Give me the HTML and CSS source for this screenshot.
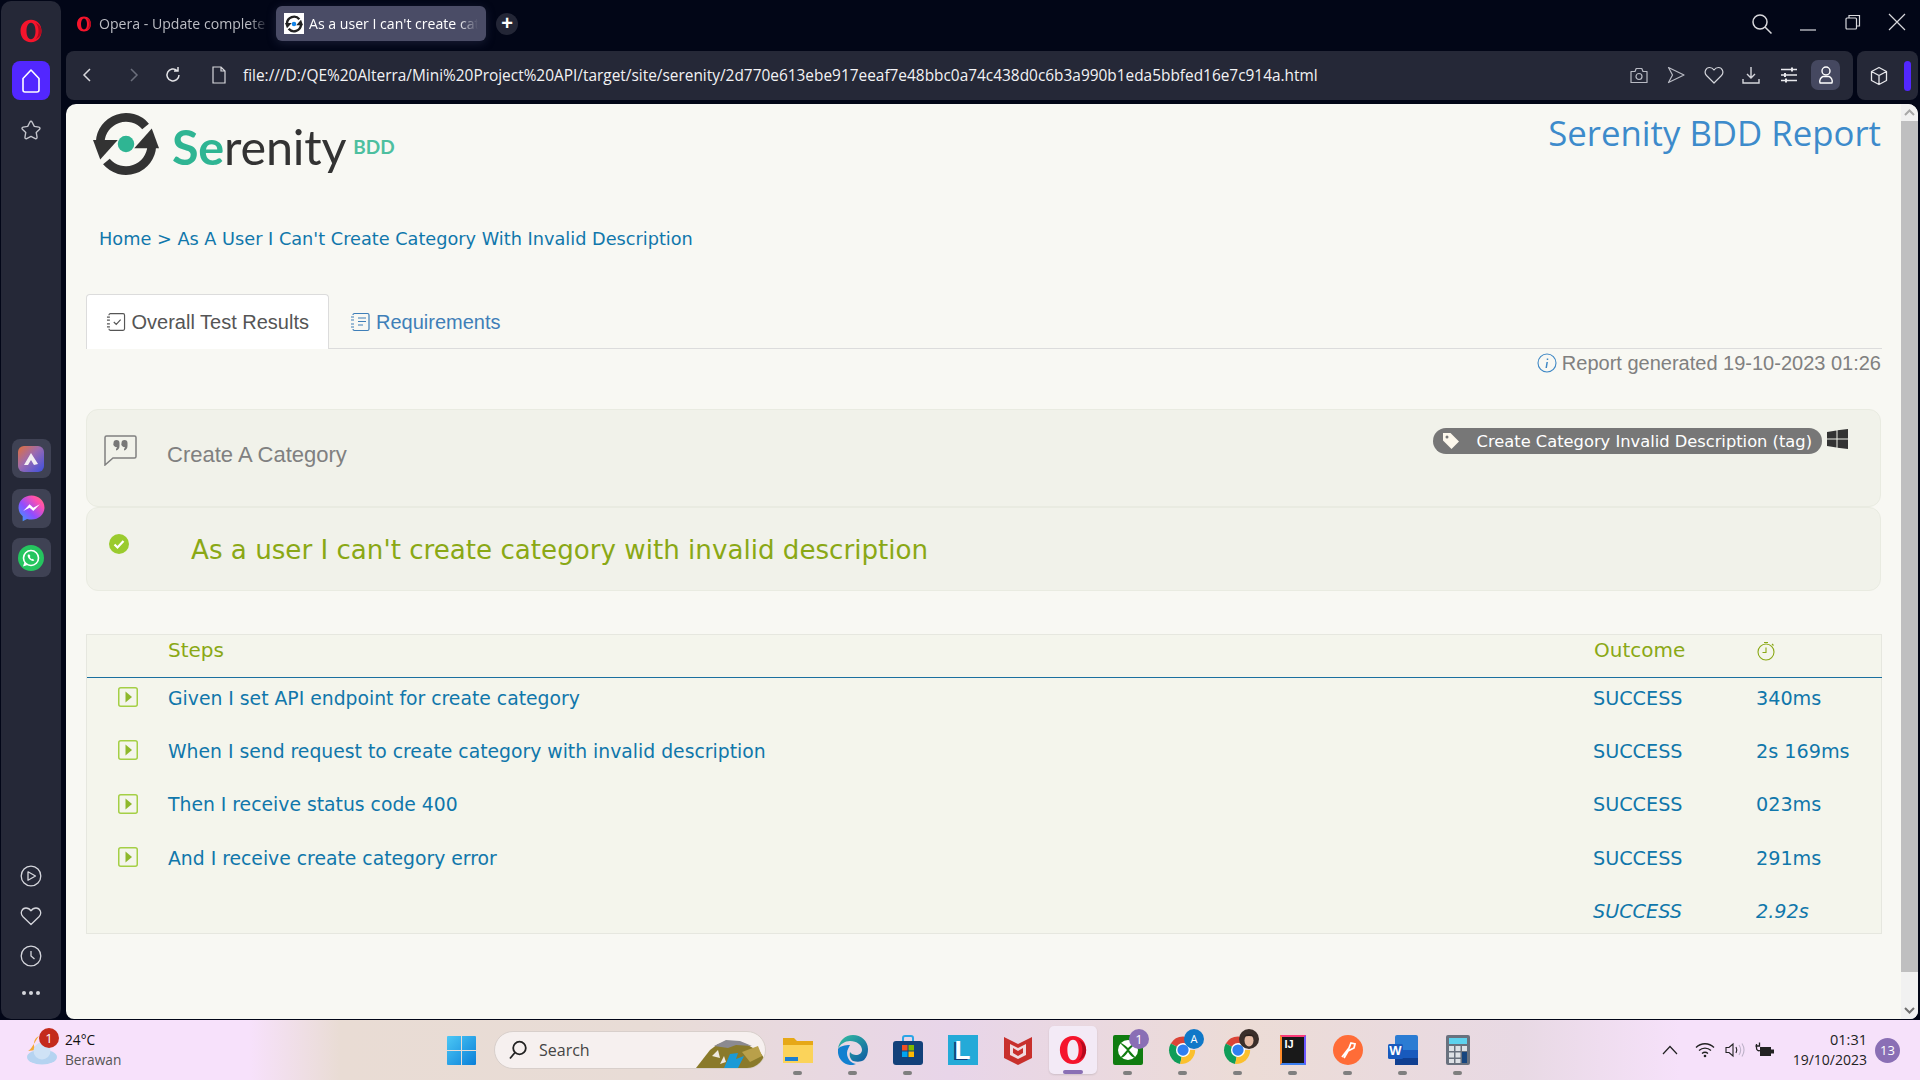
FILE: index.html
```html
<!DOCTYPE html>
<html lang="en">
<head>
<meta charset="utf-8">
<title>As a user I can't create category with invalid description</title>
<link rel="stylesheet" href="styles.css">
</head>
<body>
<svg class="defs" width="0" height="0" aria-hidden="true">
  <defs>
    <symbol id="serenity" viewBox="0 0 64 64">
      <path d="M7 30A25 25 0 0 1 51 15" fill="none" stroke="currentColor" stroke-width="8.500"/>
      <path d="M0 28H24L7 47Z" fill="currentColor"/>
      <path d="M57 34A25 25 0 0 1 13 49" fill="none" stroke="currentColor" stroke-width="8.500"/>
      <path d="M64 36H40L57 17Z" fill="currentColor"/>
    </symbol>
    <symbol id="opera" viewBox="0 0 32 32">
      <path fill-rule="evenodd" d="M16 1C7 1 2 8 2 16s5 15 14 15 14-7 14-15S25 1 16 1Zm0 4c4 0 6 5 6 11s-2 11-6 11-6-5-6-11 2-11 6-11Z" fill="#f5142c"/>
      <path d="M22 5c5 2 8 6 8 11s-3 9-8 11c3-3 4-7 4-11s-1-8-4-11Z" fill="#b30a1e"/>
    </symbol>
    <symbol id="chrome" viewBox="0 0 32 32">
      <path d="M16 16 3 9A15 15 0 0 1 29 9H16Z" fill="#db4437"/>
      <path d="M16 16 3 9A15 15 0 0 0 13 31Z" fill="#0f9d58"/>
      <path d="M16 16H29A15 15 0 0 1 13 31Z" fill="#fbc02d"/>
      <circle cx="16" cy="16" r="7.500" fill="#fff"/><circle cx="16" cy="16" r="6" fill="#2f7ff0"/>
    </symbol>
    <symbol id="play-box" viewBox="0 0 20 20">
      <rect x=".75" y=".75" width="18.5" height="18.5" rx="2" fill="none" stroke="#a4cf45" stroke-width="1.5"/>
      <path d="M7.5 4.5 14 10l-6.500 5.500Z" fill="#8eb82c"/>
    </symbol>
  </defs>
</svg>

<div class="screen">
  <div class="app">
    <aside class="sidebar">
      <svg class="side-logo" width="24" height="28" viewBox="0 0 32 32"><use href="#opera"/></svg>
      <div class="home-btn">
        <svg width="22" height="26" viewBox="0 0 22 26" fill="none" stroke="#fff" stroke-width="1.600"><path d="M3 10.500 11 2l8 8.500V22a2 2 0 0 1-2 2H5a2 2 0 0 1-2-2Z" stroke-linejoin="round"/></svg>
      </div>
      <svg class="side-star" width="22" height="22" viewBox="0 0 24 24" fill="none" stroke="#c4c5cc" stroke-width="1.500" stroke-linejoin="round"><path d="M12 2.500c.6 0 1 .4 1.300 1l2.300 4.600 5 .8c1.200.2 1.600 1.400.8 2.200L17.700 14.700l.9 5.200c.2 1.200-.8 2-1.900 1.500L12 19l-4.700 2.400c-1.100.5-2.100-.3-1.900-1.500l.9-5.200-3.700-3.600c-.8-.8-.4-2 .8-2.200l5-.8 2.300-4.600c.3-.6.700-1 1.300-1Z"/></svg>
      <div class="side-apps">
        <div class="app-btn"><svg width="26" height="26" viewBox="0 0 26 26"><defs><linearGradient id="aria" x1="0" y1="0" x2="1" y2="1"><stop offset="0" stop-color="#e2703a"/><stop offset=".45" stop-color="#9c6bb0"/><stop offset="1" stop-color="#3b4fe0"/></linearGradient></defs><rect width="26" height="26" rx="6" fill="url(#aria)"/><path d="M6 19 13 7l7 11-4 1-3-5-3 5Z" fill="#f2edf2"/></svg></div>
        <div class="app-btn"><svg width="27" height="27" viewBox="0 0 26 26"><defs><linearGradient id="msg" x1="0" y1="1" x2="1" y2="0"><stop offset="0" stop-color="#2ea6ff"/><stop offset=".4" stop-color="#8f4dff"/><stop offset=".75" stop-color="#ff4fb0"/><stop offset="1" stop-color="#ff7a6a"/></linearGradient></defs><path d="M13 .5C6 .5.5 5.500.5 12c0 3.500 1.500 6.400 4 8.500v4.800l4.200-2.300c1.300.4 2.800.6 4.300.6 7 0 12.500-5 12.500-11.500S20 .5 13 .5Z" fill="url(#msg)"/><path d="m5 15.500 6.200-6.500 3.500 3.300L21 9l-6.300 6.500-3.500-3.300Z" fill="#fff"/></svg></div>
        <div class="app-btn"><svg width="26" height="26" viewBox="0 0 26 26"><circle cx="13" cy="13" r="13" fill="#25c55f"/><circle cx="13" cy="13" r="7.500" fill="none" stroke="#fff" stroke-width="1.600"/><path d="M5 21.500 6.500 17l3 3Z" fill="#fff"/><path d="M10 9.500c-1 1.500.5 4 1.800 5 1.500 1.300 3.600 2 4.500.8l-1.500-1.500-1 .5c-1-.5-1.600-1.200-2-2.200l.6-1-1-1.600Z" fill="#fff"/></svg></div>
      </div>
      <div class="side-bottom">
        <svg width="22" height="22" viewBox="0 0 22 22" fill="none" stroke="#d5d6dc" stroke-width="1.300"><circle cx="11" cy="11" r="9.800"/><path d="M8 6.800 15.500 11 8 15.200Z" stroke-linejoin="round"/></svg>
        <svg width="22" height="22" viewBox="0 0 22 22" fill="none" stroke="#d5d6dc" stroke-width="1.300"><path d="M11 19.500 3 11.800C-.5 8 2 3 6 3c2.200 0 3.800 1 5 2.800C12.200 4 13.800 3 16 3c4 0 6.500 5 3 8.800Z" stroke-linejoin="round"/></svg>
        <svg width="22" height="22" viewBox="0 0 22 22" fill="none" stroke="#d5d6dc" stroke-width="1.300"><circle cx="11" cy="11" r="9.800"/><path d="M11 6v5l3.500 3"/></svg>
        <div class="dots"><i></i><i></i><i></i></div>
      </div>
    </aside>

    <div class="browser">
      <div class="tabbar">
        <div class="tab tab-plain">
          <svg width="16" height="18" viewBox="0 0 32 32"><use href="#opera"/></svg>
          <span class="tab-title">Opera - Update complete</span>
        </div>
        <div class="tab tab-active">
          <span class="favicon"><svg width="18" height="18" viewBox="0 0 64 64"><use href="#serenity"/><circle cx="32" cy="32" r="8" fill="#1284e8"/></svg></span>
          <span class="tab-title">As a user I can't create cat</span>
        </div>
        <div class="new-tab">+</div>
        <div class="win-controls">
          <svg width="22" height="22" viewBox="0 0 22 22" fill="none" stroke="#d8d8dc" stroke-width="1.500"><circle cx="9" cy="9" r="7"/><path d="m14 14 6.500 6.500"/></svg>
          <svg class="win-min" width="18" height="18" viewBox="0 0 18 18" stroke="#d8d8dc" stroke-width="1.200"><path d="M1 14H17"/></svg>
          <svg width="18" height="18" viewBox="0 0 18 18" fill="none" stroke="#d8d8dc" stroke-width="1.200"><rect x="2" y="5" width="10.500" height="11" rx="1"/><path d="M5 5V2.500h10.500V13H12.500"/></svg>
          <svg width="18" height="18" viewBox="0 0 18 18" stroke="#d8d8dc" stroke-width="1.200"><path d="m1 1 16 16M17 1 1 17"/></svg>
        </div>
      </div>

      <div class="toolbar">
        <div class="addressbar">
          <svg class="nav" width="12" height="18" viewBox="0 0 12 18" fill="none" stroke="#d8d8dc" stroke-width="1.500"><path d="M9 3 3 9l6 6"/></svg>
          <svg class="nav nav-off" width="12" height="18" viewBox="0 0 12 18" fill="none" stroke="#6b6e7c" stroke-width="1.500"><path d="m3 3 6 6-6 6"/></svg>
          <svg class="nav nav-reload" width="18" height="18" viewBox="0 0 18 18" fill="none" stroke="#e4e4e8" stroke-width="1.500"><path d="M15 9a6 6 0 1 1-2-4.500M14 1v4h-4"/></svg>
          <svg class="nav page-ic" width="14" height="18" viewBox="0 0 14 18" fill="none" stroke="#d8d8dc" stroke-width="1.200"><path d="M1 1h8l4 4v12H1ZM9 1v4h4"/></svg>
          <span class="url">file:///D:/QE%20Alterra/Mini%20Project%20API/target/site/serenity/2d770e613ebe917eeaf7e48bbc0a74c438d0c6b3a990b1eda5bbfed16e7c914a.html</span>
          <div class="addr-tools">
            <svg width="20" height="20" viewBox="0 0 20 20" fill="none" stroke="#b9bbc4" stroke-width="1.200"><path d="M2 6.500h4l1.200-3h5.600l1.200 3h4v11H2Z" stroke-linejoin="round"/><circle cx="10" cy="11.500" r="3"/></svg>
            <svg width="20" height="20" viewBox="0 0 20 20" fill="none" stroke="#b9bbc4" stroke-width="1.200"><path d="M2.500 2.500 18 10 2.500 17.500 6.500 10Z" stroke-linejoin="round"/></svg>
            <svg width="20" height="20" viewBox="0 0 20 20" fill="none" stroke="#d5d6dc" stroke-width="1.200"><path d="M10 18 2.500 10.500C-.5 7 2 2.500 5.500 2.500c2 0 3.500 1 4.500 2.500 1-1.500 2.500-2.500 4.500-2.500 3.500 0 6 4.500 3 8Z" stroke-linejoin="round"/></svg>
            <svg width="20" height="20" viewBox="0 0 20 20" fill="none" stroke="#d5d6dc" stroke-width="1.400"><path d="M10 2v11M6 9l4 4 4-4M2 14v4h16v-4"/></svg>
            <svg width="20" height="20" viewBox="0 0 20 20" fill="none" stroke="#e8e8ec"><path d="M2 4.500h16M2 10h16M2 15.500h16" stroke-width="1.300"/><path d="M13 2.500v4M6 8v4M7 13.500v4" stroke-width="2"/></svg>
            <div class="user-btn"><svg width="16" height="20" viewBox="0 0 16 20" fill="none" stroke="#fff" stroke-width="1.400"><circle cx="8" cy="6" r="4"/><path d="M2 18c-1-3 1-6 3-6.500h6c2 .5 4 3.500 3 6.500Z" stroke-linejoin="round"/></svg></div>
          </div>
        </div>
        <div class="extbar">
          <svg width="18" height="20" viewBox="0 0 18 20" fill="none" stroke="#e8e8ec" stroke-width="1.300"><path d="M9 1.500 16.500 5.500v9L9 18.500 1.500 14.500v-9ZM1.500 5.500 9 9.500l7.500-4M9 9.500v9" stroke-linejoin="round"/></svg>
          <span class="ext-pill"></span>
        </div>
      </div>

      <div class="page">
        <main class="content">
          <header class="report-head">
            <div class="logo">
              <svg class="logo-mark" width="66" height="66" viewBox="0 0 64 64"><use href="#serenity"/><circle cx="32" cy="32" r="8" fill="#2fb593"/></svg>
              <span class="logo-word"><b>Se</b>renity</span>
              <span class="logo-bdd">BDD</span>
            </div>
            <h1 class="report-title">Serenity BDD Report</h1>
          </header>

          <nav class="crumbs"><a>Home</a> &gt; <a>As A User I Can't Create Category With Invalid Description</a></nav>

          <div class="tabs">
            <div class="page-tab page-tab-on">
              <svg width="20" height="20" viewBox="0 0 20 20" fill="none" stroke="#555" stroke-width="1.200"><path d="M3 3a1.500 1.500 0 0 1 1.500-1.500h13A1.500 1.500 0 0 1 19 3v14a1.500 1.500 0 0 1-1.500 1.500h-13A1.500 1.500 0 0 1 3 17M1 5h3M1 8h3M1 12h3M1 15h3M8 10l2.500 2.500L15 7.500"/></svg>
              Overall Test Results
            </div>
            <div class="page-tab page-tab-off">
              <svg width="20" height="20" viewBox="0 0 20 20" fill="none" stroke="#3f7fb8" stroke-width="1.200"><path d="M3 3a1.500 1.500 0 0 1 1.500-1.500h13A1.500 1.500 0 0 1 19 3v14a1.500 1.500 0 0 1-1.500 1.500h-13A1.500 1.500 0 0 1 3 17M1 5h3M1 8h3M1 12h3M1 15h3M8 6h8M8 9.500h8M8 13h5"/></svg>
              Requirements
            </div>
          </div>

          <p class="generated">
            <svg width="20" height="20" viewBox="0 0 20 20" fill="none"><circle cx="10" cy="10" r="9" stroke="#3f88c5" stroke-width="1.100"/><path d="M10.500 5.500v1.500M10.200 9l-1 6" stroke="#3f88c5" stroke-width="1.500"/></svg>
            Report generated 19-10-2023 01:26
          </p>

          <section class="panel panel-story">
            <svg class="quote-ic" width="33" height="31" viewBox="0 0 33 31" fill="none"><path d="M1 2.500A1.500 1.500 0 0 1 2.500 1h28A1.500 1.500 0 0 1 32 2.500v19a1.500 1.500 0 0 1-1.500 1.500H9l-8 7Z" stroke="#808080" stroke-width="1.500"/><path d="M9.500 8a3 3 0 0 1 6 0v3c0 2.500-1.500 4-3.500 4.500v-1.800c.7-.3 1-.8 1.100-1.700a3 3 0 0 1-3.600-4ZM17.500 8a3 3 0 0 1 6 0v3c0 2.500-1.500 4-3.500 4.500v-1.800c.7-.3 1-.8 1.100-1.700a3 3 0 0 1-3.600-4Z" fill="#777"/></svg>
            <h2 class="story-name">Create A Category</h2>
            <div class="tag-wrap">
              <span class="tag">
                <svg width="18" height="18" viewBox="0 0 18 18"><path d="M1 1h7.500L17 9.500 9.500 17 1 8.500Z" fill="#fdf8ec"/><circle cx="5" cy="5" r="1.500" fill="#777"/></svg>
                Create Category Invalid Description (tag)
              </span>
              <svg class="win-logo" width="21" height="20" viewBox="0 0 21 20" fill="#333"><path d="M0 3 9.500 1.500V9.500H0ZM10.500 1.300 21 0V9.500H10.500ZM0 10.500H9.500V18.500L0 17ZM10.500 10.500H21V20L10.500 18.700Z"/></svg>
            </div>
          </section>

          <section class="panel panel-title">
            <svg class="ok-ic" width="20" height="20" viewBox="0 0 20 20"><circle cx="10" cy="10" r="10" fill="#9acb2e"/><path d="m5.500 10.500 3 3 6-6.500" fill="none" stroke="#fff" stroke-width="2.200"/></svg>
            <h2 class="scenario">As a user I can't create category with invalid description</h2>
          </section>

          <section class="steps">
            <div class="row row-head">
              <span></span><span>Steps</span><span>Outcome</span>
              <span><svg class="clock-ic" width="18" height="20" viewBox="0 0 18 20" fill="none" stroke="#8aa815" stroke-width="1.100"><circle cx="9" cy="11" r="8"/><path d="M9 6.500V11.500H5.500M7 1.500h4M15 3l1.500 1.500"/></svg></span>
            </div>
            <div class="row row-first"><svg width="20" height="20"><use href="#play-box"/></svg><a>Given I set API endpoint for create category</a><span>SUCCESS</span><span>340ms</span></div>
            <div class="row"><svg width="20" height="20"><use href="#play-box"/></svg><a>When I send request to create category with invalid description</a><span>SUCCESS</span><span>2s 169ms</span></div>
            <div class="row"><svg width="20" height="20"><use href="#play-box"/></svg><a>Then I receive status code 400</a><span>SUCCESS</span><span>023ms</span></div>
            <div class="row"><svg width="20" height="20"><use href="#play-box"/></svg><a>And I receive create category error</a><span>SUCCESS</span><span>291ms</span></div>
            <div class="row row-total"><span></span><span></span><span>SUCCESS</span><span>2.92s</span></div>
          </section>
        </main>
        <div class="scrollbar">
          <div class="sb-btn"><svg width="11" height="7" viewBox="0 0 11 7" fill="none" stroke="#a8a8a8" stroke-width="2"><path d="m1 6 4.500-4.500L10 6"/></svg></div>
          <div class="sb-thumb"></div>
          <div class="sb-track"></div>
          <div class="sb-btn"><svg width="11" height="7" viewBox="0 0 11 7" fill="none" stroke="#707070" stroke-width="2"><path d="m1 1 4.500 4.500L10 1"/></svg></div>
        </div>
      </div>
    </div>
  </div>

  <footer class="taskbar">
    <div class="weather">
      <svg class="weather-ic" width="33" height="30" viewBox="0 0 33 30"><path d="M14 1C9 3 7 10 11 15l-8 1c3-1 6-8 11-15Z" fill="#f3a935"/><ellipse cx="17" cy="22" rx="15" ry="7.500" fill="#b5d3f1"/><circle cx="17" cy="16" r="8.500" fill="#cfe2f6"/></svg>
      <span class="wx-badge">1</span>
      <div class="wx-text"><span class="wx-temp">24°C</span><span class="wx-desc">Berawan</span></div>
    </div>

    <div class="dock">
      <svg class="start" width="29" height="29" viewBox="0 0 29 29"><defs><linearGradient id="wing" x1="0" y1="0" x2="1" y2="1"><stop offset="0" stop-color="#4cc8f5"/><stop offset="1" stop-color="#0a7fd8"/></linearGradient></defs><path d="M0 1a1 1 0 0 1 1-1h13v14H0ZM15 0h13a1 1 0 0 1 1 1v13H15ZM0 15h14v14H1a1 1 0 0 1-1-1ZM15 15h14v13a1 1 0 0 1-1 1H15Z" fill="url(#wing)"/></svg>
      <div class="searchbox">
        <svg width="20" height="20" viewBox="0 0 20 20" fill="none" stroke="#222" stroke-width="1.800"><circle cx="11.500" cy="8" r="6.300"/><path d="M7 12.500 2 18.500"/></svg>
        <span class="search-text">Search</span>
        <svg class="search-art" width="68" height="30" viewBox="0 0 68 30"><path d="M0 30 14 12 22 6l12-2 16 2 14 8 4 6-3 10Z" fill="#8a7a2a"/><path d="M18 8 30 2l14 1 12 5-16-1-8 3Z" fill="#8b8a90"/><path d="M28 30 34 16l8-1-2 6 8-3-6 12Z" fill="#1a9ad6"/><path d="M46 14 62 8l4 10-12 6Z" fill="#b9a04a"/><path d="M16 18 22 12l2 8ZM24 26l4-8 2 6Z" fill="#efeae0"/></svg>
      </div>
      <div class="dock-icons">
        <div class="dock-item run"><svg width="30" height="30" viewBox="0 0 30 30"><path d="M0 3h11l3 3h16v8H0Z" fill="#e6a817"/><path d="M0 10h30v18H0Z" fill="#fbd35a"/><rect x="2" y="22" width="13" height="4" fill="#1b7fd0"/></svg></div>
        <div class="dock-item"><svg width="30" height="30" viewBox="0 0 30 30"><defs><linearGradient id="edge" x1="0" y1="0" x2="1" y2="1"><stop offset="0" stop-color="#35c1a0"/><stop offset="1" stop-color="#0c59a4"/></linearGradient></defs><path d="M15 0C7 0 1 6 0 14c2-5 7-8 12-8 7 0 12 4 12 9 0 3-3 5-6 5-2 0-5-1-6-3-1 3 0 7 3 9 4 1 8 1 11-1 3-3 4-7 4-11C30 6 23 0 15 0Z" fill="url(#edge)"/><path d="M0 14c-1 8 4 15 12 16 2 0 4 0 6-1-5-1-9-5-9-11 0-3 2-6 3-8-5 0-10 1-12 4Z" fill="#1380d0"/></svg></div>
        <div class="dock-item"><svg width="30" height="30" viewBox="0 0 30 30"><path d="M10 6V3a2 2 0 0 1 2-2h6a2 2 0 0 1 2 2v3" fill="none" stroke="#2ba5e6" stroke-width="2"/><rect y="6" width="30" height="24" rx="3" fill="#12417a"/><rect x="9" y="10" width="5.500" height="5.500" fill="#f25022"/><rect x="15.500" y="10" width="5.500" height="5.500" fill="#7fba00"/><rect x="9" y="16.500" width="5.500" height="5.500" fill="#00a4ef"/><rect x="15.500" y="16.500" width="5.500" height="5.500" fill="#ffb900"/></svg></div>
        <div class="dock-item no-run"><span class="lingo">L</span></div>
        <div class="dock-item no-run"><svg width="28" height="30" viewBox="0 0 28 30"><path d="M0 2 14 9 28 2V23L14 30 0 23Z" fill="#c8302c"/><path d="M6 9 14 13 22 9V20L14 24 6 20Z" fill="#f0dce0"/><path d="M9 13 14 16 19 13V18L14 21 9 18Z" fill="#c8302c"/></svg></div>
        <div class="dock-item active"><svg width="30" height="30" viewBox="0 0 32 32"><use href="#opera"/></svg></div>
        <div class="dock-item"><svg width="30" height="30" viewBox="0 0 30 30"><rect width="30" height="30" rx="2" fill="#107c10"/><circle cx="15" cy="15" r="10" fill="#fff"/><path d="M15 13C12 10 9 8 7 8l7 7-7 8c3 0 6-3 8-6 2 3 5 6 8 6l-7-8 7-7c-2 0-5 2-8 5Z" fill="#107c10"/></svg><span class="dock-badge">1</span></div>
        <div class="dock-item"><svg width="30" height="30" viewBox="0 0 32 32"><use href="#chrome"/></svg><span class="dock-badge badge-blue">A</span></div>
        <div class="dock-item"><svg width="30" height="30" viewBox="0 0 32 32"><use href="#chrome"/></svg><svg class="avatar" width="20" height="20" viewBox="0 0 20 20"><circle cx="10" cy="10" r="10" fill="#3a2e2a"/><ellipse cx="10" cy="11.500" rx="4.500" ry="6" fill="#e5bba6"/><path d="M5 8c2-4 8-4 10 0-3-1.500-7-1.500-10 0Z" fill="#2a201d"/></svg></div>
        <div class="dock-item"><span class="ij"><span class="ij-text">IJ</span></span></div>
        <div class="dock-item"><svg width="30" height="30" viewBox="0 0 30 30"><circle cx="15" cy="15" r="15" fill="#ff6c37"/><path d="M9 22 16 13l2-5 4 1-1 4-6 3-4 7" fill="none" stroke="#fff" stroke-width="1.800"/></svg></div>
        <div class="dock-item"><svg width="30" height="30" viewBox="0 0 30 30"><rect x="7" y="0" width="23" height="30" rx="2" fill="#2b7cd3"/><rect x="7" y="15" width="23" height="8" fill="#185abd"/><rect x="7" y="23" width="23" height="7" fill="#103f91"/><rect x="0" y="9" width="15" height="15" rx="1.500" fill="#185abd"/></svg><span class="word-w">W</span></div>
        <div class="dock-item"><svg width="24" height="30" viewBox="0 0 24 30"><rect width="24" height="30" rx="2" fill="#69717e"/><rect x="3" y="3" width="18" height="6" fill="#5dd2ee"/><path d="M3 11h5v5H3ZM9.500 11h5v5h-5ZM3 17.500h5v5H3ZM9.500 17.500h5v5h-5ZM3 24h5v4H3ZM9.500 24h5v4h-5Z" fill="#dde1e6"/><rect x="16" y="17" width="5" height="11" fill="#17467f"/><rect x="16" y="11" width="5" height="5" fill="#dde1e6"/></svg></div>
      </div>
    </div>

    <div class="tray">
      <svg class="tray-chev" width="16" height="10" viewBox="0 0 16 10" fill="none" stroke="#222" stroke-width="1.200"><path d="m1 9 7-7.500L15 9"/></svg>
      <svg width="20" height="16" viewBox="0 0 20 16" fill="none" stroke="#222" stroke-width="1.300"><path d="M1 5.500c5-5 13-5 18 0M4 8.500c3.500-3.200 8.500-3.200 12 0M7 11.500c1.800-1.500 4.200-1.500 6 0"/><circle cx="10" cy="14" r="1.300" fill="#222" stroke="none"/></svg>
      <svg width="20" height="16" viewBox="0 0 20 16" fill="none" stroke="#222" stroke-width="1.100"><path d="M1 5.500h3L8 2v12l-4-3.500H1Z"/><path d="M11 5c1 1.800 1 4.200 0 6"/><path d="M14 3c2 3 2 7 0 10M17 1.500c2.500 4 2.500 9 0 13" stroke="#bdb2c8"/></svg>
      <svg width="20" height="16" viewBox="0 0 20 16"><path d="M5 5h11v9H5Z" fill="#222"/><rect x="16" y="7.500" width="3" height="4" fill="#222"/><path d="M1.500 2v4a2.500 2.500 0 0 0 3.500 2.500" fill="none" stroke="#222" stroke-width="1.300"/><path d="M.5 4h4V.5" fill="none" stroke="#222" stroke-width="1.300"/></svg>
      <div class="clock"><span class="clock-time">01:31</span><span>19/10/2023</span></div>
      <span class="notif">13</span>
    </div>
  </footer>
</div>
</body>
</html>
```

FILE: styles.css
```css
* { box-sizing: border-box; }
html, body { margin: 0; height: 100%; overflow: hidden; }
body { font-family: "Open Sans", "Liberation Sans", sans-serif; }
.defs { position: absolute; }
a { color: inherit; }

.screen { width: 1920px; height: 1080px; display: flex; flex-direction: column; background: #020617; color: #222; }
.app { height: 1019px; display: flex; padding-left: 1px; }

/* left sidebar */
.sidebar { width: 60px; margin-top: 1px; height: 1018px; background: #252837; border-radius: 10px; display: flex; flex-direction: column; align-items: center; padding-top: 16px; }
.side-logo { display: block; }
.home-btn { width: 38px; height: 39px; margin-top: 16px; background: #5227ff; border-radius: 8px; display: flex; align-items: center; justify-content: center; }
.side-star { margin-top: 19px; }
.side-apps { margin-top: 298px; display: flex; flex-direction: column; gap: 10.500px; }
.app-btn { width: 39px; height: 39px; background: #3f4254; border-radius: 8px; display: flex; align-items: center; justify-content: center; }
.side-bottom { margin-top: auto; padding-bottom: 22px; display: flex; flex-direction: column; align-items: center; gap: 18px; }
.dots { display: flex; gap: 3px; height: 8px; align-items: center; margin-top: 4px; }
.dots i { width: 4px; height: 4px; border-radius: 50%; background: #d5d6dc; }

/* browser chrome */
.browser { flex: 1; min-width: 0; padding-left: 5px; display: flex; flex-direction: column; }
.tabbar { height: 51px; display: flex; align-items: flex-start; color: #fff; }
.tab { height: 35px; margin-top: 6px; display: flex; align-items: center; font-size: 14.100px; white-space: nowrap; overflow: hidden; }
.tab-plain { width: 210px; padding-left: 10px; gap: 7px; color: #bcbdc4; }
.tab-title { overflow: hidden; flex: 1; -webkit-mask-image: linear-gradient(90deg, #000 88%, transparent 100%); mask-image: linear-gradient(90deg, #000 88%, transparent 100%); }
.tab-plain .tab-title { max-width: 170px; }
.tab-active { width: 210px; background: #4a4c66; border-radius: 6px; padding: 0 8px; gap: 5px; color: #fff; box-shadow: 0 2px 10px rgba(70, 72, 110, .35); }
.favicon { width: 20px; height: 21px; background: #fff; color: #222; display: flex; align-items: center; justify-content: center; flex: none; }
.new-tab { width: 22px; height: 22px; margin: 13px 0 0 10px; border-radius: 50%; background: #232636; color: #fff; font: 700 20px/21px "Liberation Sans", sans-serif; text-align: center; }
.win-controls { margin-left: auto; margin-right: 14px; width: 155px; padding-top: 13px; display: flex; justify-content: space-between; align-items: flex-start; }
.win-min { margin-top: 3px; }

.toolbar { height: 49px; display: flex; gap: 4px; }
.addressbar { width: 1787px; padding-bottom: 1px; background: #252837; border-radius: 8px; display: flex; align-items: center; padding-left: 15px; color: #fff; }
.nav { flex: none; }
.nav-off { margin-left: 35px; }
.nav-reload { margin-left: 24px; }
.page-ic { margin-left: 30px; }
.url { margin-left: 17px; font-size: 15.420px; white-space: nowrap; color: #f2f2f4; width: 1076px; }
.addr-tools { margin-left: auto; padding-right: 13px; display: flex; align-items: center; gap: 17.500px; }
.user-btn { width: 29px; height: 30px; border-radius: 7px; background: #454860; display: flex; align-items: center; justify-content: center; margin-left: -5px; }
.extbar { width: 61px; background: #252837; border-radius: 8px; display: flex; align-items: center; padding-left: 13px; gap: 16px; }
.ext-pill { width: 7px; height: 30px; border-radius: 4px; background: #5227ff; }

/* report page */
.page { margin-top: 4px; width: 1852px; height: 915px; background: #f8f8f3; border-radius: 10px 10px 8px 8px; display: flex; overflow: hidden; }
.content { flex: 1; min-width: 0; padding: 0 19px 0 20px; font-family: "DejaVu Sans", sans-serif; }
.scrollbar { width: 17px; background: #f1f1f1; display: flex; flex-direction: column; }
.sb-btn { height: 17px; display: flex; align-items: center; justify-content: center; }
.sb-thumb { height: 851px; background: #bfbfc0; }
.sb-track { flex: 1; }

.report-head { height: 105px; display: flex; justify-content: space-between; align-items: flex-start; }
.logo { display: flex; align-items: flex-start; padding: 7px 0 0 7px; }
.logo-mark { color: #333; flex: none; }
.logo-word { margin: 5px 0 0 13px; font: 400 48.500px/60px "Lato", "Open Sans", sans-serif; color: #333; letter-spacing: -.2px; }
.logo-word b { font-weight: 700; color: #2fb593; }
.logo-bdd { margin: 24px 0 0 7px; font: 700 19px/24px "Lato", sans-serif; color: #4dbf9f; }
.report-title { margin: 6px 1px 0 0; font: 400 34.750px/46px "Open Sans", sans-serif; color: #3d8bcb; }

.crumbs { height: 22px; margin: 19px 0 0 13px; font-size: 17.720px; line-height: 22px; color: #1077ab; white-space: nowrap; }

.tabs { margin-top: 44px; height: 55px; display: flex; border-bottom: 1px solid #dcdcdc; font: 20px/26px "Liberation Sans", sans-serif; white-space: nowrap; }
.page-tab { height: 55px; display: flex; align-items: center; gap: 6px; padding: 0 19px; color: #3f7fb8; }
.page-tab-on { width: 243px; background: #fff; border: 1px solid #dcdcdc; border-bottom: 0; border-radius: 4px 4px 0 0; color: #555; padding-left: 19px; }
.page-tab-off { padding-left: 21px; }

.generated { margin: 1px 1px 0 0; height: 26px; display: flex; justify-content: flex-end; align-items: center; gap: 5px; font: 20px/26px "Liberation Sans", sans-serif; color: #808080; }

.panel { width: 1795px; background: #f1f2ea; border: 1px solid #e9ebe1; border-radius: 12px; position: relative; }
.panel-story { margin-top: 33px; height: 98px; display: flex; align-items: flex-start; padding: 25px 0 0 17px; }
.quote-ic { flex: none; }
.story-name { margin: 6px 0 0 30px; font: 400 22px/28px "Liberation Sans", sans-serif; color: #808080; }
.tag-wrap { margin-left: auto; margin-top: -7px; padding-right: 32px; display: flex; align-items: flex-start; gap: 5px; }
.tag { height: 26px; padding: 0 10px 0 9px; border-radius: 13px; background: #777; color: #fff; display: flex; align-items: center; gap: 17px; font-size: 16.300px; white-space: nowrap; }
.win-logo { margin-top: 1px; }
.panel-title { height: 84px; display: flex; align-items: flex-start; padding: 26px 0 0 22px; }
.ok-ic { flex: none; }
.scenario { margin: 0 0 0 62px; font: 400 26.150px/32px "DejaVu Sans", sans-serif; color: #8aa815; white-space: nowrap; }

.steps { margin-top: 43px; width: 1796px; height: 300px; background: #f4f5ec; border: 1px solid #e6e7df; font-size: 19.200px; color: #1077ab; }
.row { display: grid; grid-template-columns: 81px 1fr 163px 125px; height: 53.500px; align-items: center; }
.row > svg { margin-left: 31px; margin-top: -2px; }
.row > a { font-size: 18.800px; }
.row-head { height: 43px; border-bottom: 1.500px solid #1a6f9f; margin-right: -1px; color: #8aa815; align-items: flex-start; padding-top: 3px; font-size: 20px; line-height: 24px; }
.clock-ic { display: block; margin-top: 3px; }
.row-first { height: 46.500px; padding-bottom: 6px; }
.row-total { font-style: italic; }

/* taskbar */
.taskbar { height: 61px; border-top: 1px solid #020617; display: flex; align-items: center; font-family: "Open Sans", sans-serif; position: relative; background: linear-gradient(90deg, #f7e1fb 0, #f7e1fb 250px, #e9dcd4 340px, #e8dcd6 650px, #e8d5e9 950px, #ecdcd6 1250px, #e8d9e4 1520px, #f6e1fa 1680px, #f6e1fa 100%); }
.weather { width: 447px; padding-left: 25px; display: flex; align-items: center; position: relative; height: 100%; }
.weather-ic { flex: none; }
.wx-badge { position: absolute; left: 39px; top: 8px; width: 20px; height: 20px; border-radius: 50%; background: #c42b1c; color: #fff; font-size: 13px; line-height: 20px; text-align: center; }
.wx-text { margin-left: 7px; display: flex; flex-direction: column; font-size: 13.700px; line-height: 20px; }
.wx-temp { color: #111; }
.wx-desc { color: #555; }

.dock { display: flex; align-items: center; }
.searchbox { width: 272px; height: 38px; margin-left: 18px; border-radius: 19px; background: #f6f0ef; border: 1px solid #d8cfcb; display: flex; align-items: center; padding-left: 13px; gap: 11px; overflow: hidden; }
.search-text { font-size: 16px; color: #444; }
.search-art { margin-left: auto; margin-right: 1px; margin-top: 6px; }
.dock-icons { display: flex; margin-left: 4px; }
.dock-item { width: 55px; height: 48px; display: flex; align-items: center; justify-content: center; position: relative; border-radius: 5px; }
.dock-item::after { content: ""; position: absolute; left: 23px; bottom: -1px; width: 9px; height: 4px; border-radius: 2px; background: #7f7f7f; }
.dock-item.no-run::after { display: none; }
.dock-item.active { width: 48px; margin: 0 3.500px; background: #f3eaf6; box-shadow: 0 1px 2px rgba(0, 0, 0, .12); }
.dock-item.active::after { left: 14px; width: 20px; bottom: 0; background: #8a6fb5; }
.lingo { width: 30px; height: 30px; background: #24aad8; color: #fff; font: 700 26px/30px "Liberation Sans", sans-serif; text-align: center; text-shadow: -2px 1px 0 #123a78; }
.dock-badge { position: absolute; right: 6px; top: 3px; width: 20px; height: 20px; border-radius: 50%; background: #8a6fb5; color: #fff; font-size: 13px; line-height: 20px; text-align: center; }
.badge-blue { background: #0f78c8; font-size: 11px; }
.avatar { position: absolute; right: 6px; top: 3px; }
.ij { width: 26px; height: 30px; background: #191919; border: 2px solid; border-color: #fc3a79 #6b57ff #3d7ff0 #ff8c2a; display: flex; padding: 1px 0 0 3px; }
.ij-text { color: #fff; font: 700 11px/13px "Liberation Sans", sans-serif; }
.word-w { position: absolute; left: 13px; top: 17px; width: 15px; text-align: center; color: #fff; font: 700 13px/15px "Liberation Sans", sans-serif; }

.tray { margin-left: auto; display: flex; align-items: center; padding-right: 20px; }
.tray > svg { margin-right: 10px; flex: none; }
.tray > .tray-chev { margin-right: 17px; }
.clock { margin-left: 8px; display: flex; flex-direction: column; align-items: flex-end; font-size: 14px; line-height: 20px; color: #222; }
.clock-time { font-size: 14.500px; }
.notif { width: 25px; height: 25px; margin-left: 8px; border-radius: 50%; background: #8a6fb5; color: #fff; font-size: 13px; line-height: 25px; text-align: center; }
```
